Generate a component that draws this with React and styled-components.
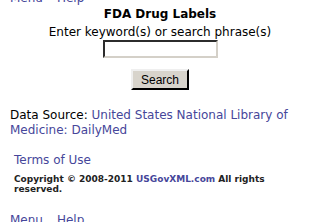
import styled, { createGlobalStyle } from "styled-components";

const Global = createGlobalStyle`
    body {
        margin: 0;
        background: #ffffff;
        font-family: "DejaVu Sans", Verdana, sans-serif;
        color: #000000;
        overflow: hidden;
    }
`

export default function App() {
    return (
        <>
            <Global />
            <Page>
                <NavLinks>
                    <a href="#">Menu</a>
                    <a href="#">Help</a>
                </NavLinks>
                <SearchForm>
                    <Title>FDA Drug Labels</Title>
                    <Prompt>Enter keyword(s) or search phrase(s)</Prompt>
                    <SearchInput type="text" />
                    <SearchButton>Search</SearchButton>
                </SearchForm>
                <Source>
                    Data Source: <a href="#">United States National Library of Medicine: DailyMed</a>
                </Source>
                <Footer>
                    <Terms href="#">Terms of Use</Terms>
                    <Copyright>
                        Copyright © 2008-2011 <a href="#">USGovXML.com</a> All rights reserved.
                    </Copyright>
                </Footer>
                <NavLinks>
                    <a href="#">Menu</a>
                    <a href="#">Help</a>
                </NavLinks>
            </Page>
        </>
    )
}

const Page = styled.div`
    margin-top: -9px;
    padding: 0 10px;
    width: 310px;
    box-sizing: border-box;

    a {
        color: #46469a;
        text-decoration: none;
    }
`

const NavLinks = styled.div`
    display: flex;
    gap: 14px;
    font-size: 12px;
    line-height: 15px;
`

const SearchForm = styled.div`
    display: flex;
    flex-direction: column;
    align-items: center;
    padding-left: 10px;
`

const Title = styled.div`
    font-size: 12px;
    font-weight: bold;
    line-height: 15px;
    margin-top: 1px;
`

const Prompt = styled.div`
    font-size: 12px;
    line-height: 15px;
    margin-top: 3px;
`

const SearchInput = styled.input`
    width: 115px;
    height: 18px;
    box-sizing: border-box;
    border: 2px inset #d4d0c8;
    border-top-color: #808080;
    border-left-color: #808080;
    background: #ffffff;
    margin: 0;
`

const SearchButton = styled.button`
    margin-top: 11px;
    width: 58px;
    height: 21px;
    font-family: "Liberation Sans", Arial, sans-serif;
    font-size: 12px;
    background: #d8d4cc;
    border: 2px outset #efefef;
    border-right-color: #404040;
    border-bottom-color: #404040;
    padding: 0;
`

const Source = styled.div`
    margin-top: 18px;
    font-size: 12px;
    line-height: 15px;
`

const Footer = styled.div`
    padding-left: 4px;
    margin-top: 15px;
`

const Terms = styled.a`
    display: block;
    font-size: 12px;
    line-height: 15px;
`

const Copyright = styled.div`
    margin-top: 6px;
    margin-bottom: 19px;
    max-width: 272px;
    font-size: 9px;
    font-weight: bold;
    line-height: 10px;
    color: #222222;
`
